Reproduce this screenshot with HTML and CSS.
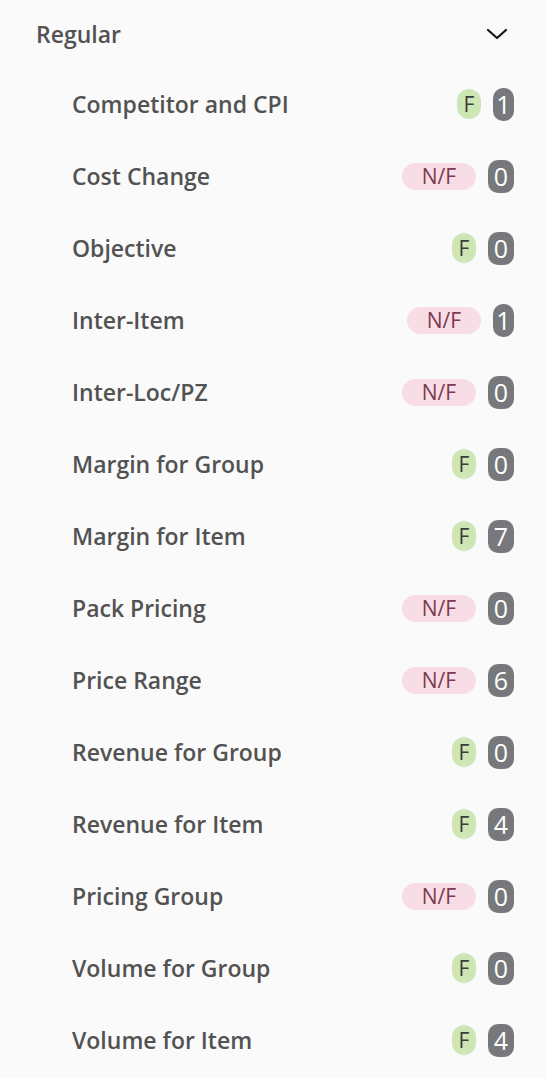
FILE: index.html
```html
<!DOCTYPE html>
<html lang="en">
<head>
  <meta charset="UTF-8">
  <title>Regular</title>
  <link rel="stylesheet" href="styles.css">
</head>
<body>

<div class="grup">
  <div class="grup-baslik">
    <span>Regular</span>
    <svg class="ok" width="22" height="14" viewBox="0 0 22 14"><path d="M2 3 L11 11 L20 3" fill="none" stroke="#161616" stroke-width="2.2" stroke-linecap="round" stroke-linejoin="round"/></svg>
  </div>

  <div class="satir"><span class="ad">Competitor and CPI</span><span class="rozet f">F</span><span class="sayi dar">1</span></div>
  <div class="satir"><span class="ad">Cost Change</span><span class="rozet nf">N/F</span><span class="sayi">0</span></div>
  <div class="satir"><span class="ad">Objective</span><span class="rozet f">F</span><span class="sayi">0</span></div>
  <div class="satir"><span class="ad">Inter-Item</span><span class="rozet nf">N/F</span><span class="sayi dar">1</span></div>
  <div class="satir"><span class="ad">Inter-Loc/PZ</span><span class="rozet nf">N/F</span><span class="sayi">0</span></div>
  <div class="satir"><span class="ad">Margin for Group</span><span class="rozet f">F</span><span class="sayi">0</span></div>
  <div class="satir"><span class="ad">Margin for Item</span><span class="rozet f">F</span><span class="sayi">7</span></div>
  <div class="satir"><span class="ad">Pack Pricing</span><span class="rozet nf">N/F</span><span class="sayi">0</span></div>
  <div class="satir"><span class="ad">Price Range</span><span class="rozet nf">N/F</span><span class="sayi">6</span></div>
  <div class="satir"><span class="ad">Revenue for Group</span><span class="rozet f">F</span><span class="sayi">0</span></div>
  <div class="satir"><span class="ad">Revenue for Item</span><span class="rozet f">F</span><span class="sayi">4</span></div>
  <div class="satir"><span class="ad">Pricing Group</span><span class="rozet nf">N/F</span><span class="sayi">0</span></div>
  <div class="satir"><span class="ad">Volume for Group</span><span class="rozet f">F</span><span class="sayi">0</span></div>
  <div class="satir"><span class="ad">Volume for Item</span><span class="rozet f">F</span><span class="sayi">4</span></div>
</div>

</body>
</html>
```

FILE: styles.css
```css
body {
  margin: 0;
  background-color: #fafafa;
  font-family: 'Open Sans', 'Noto Sans', sans-serif;
  color: #525252;
}

.grup {
  padding: 0 32px 0 36px;
}

.grup-baslik {
  display: flex;
  align-items: center;
  justify-content: space-between;
  height: 68px;
  font-size: 23px;
  font-weight: 600;
}

.ok {
  margin-right: 6px;
}

.satir {
  display: flex;
  align-items: center;
  height: 72px;
  padding-left: 36px;
}

.ad {
  flex: 1;
  font-size: 23px;
  font-weight: 600;
}

.rozet {
  display: flex;
  align-items: center;
  justify-content: center;
  margin-right: 12px;
  font-size: 21px;
}

.rozet.f {
  width: 24px;
  height: 30px;
  border-radius: 12px;
  background-color: #cde6b4;
  color: #3c3c3c;
}

.rozet.nf {
  width: 74px;
  height: 27px;
  border-radius: 14px;
  background-color: #f9dde4;
  color: #7a3a50;
}

.sayi {
  display: flex;
  align-items: center;
  justify-content: center;
  width: 26px;
  height: 33px;
  border-radius: 10px;
  background-color: #76787c;
  color: #fff;
  font-size: 25px;
  font-weight: 500;
}

.sayi.dar {
  width: 21px;
}
```
